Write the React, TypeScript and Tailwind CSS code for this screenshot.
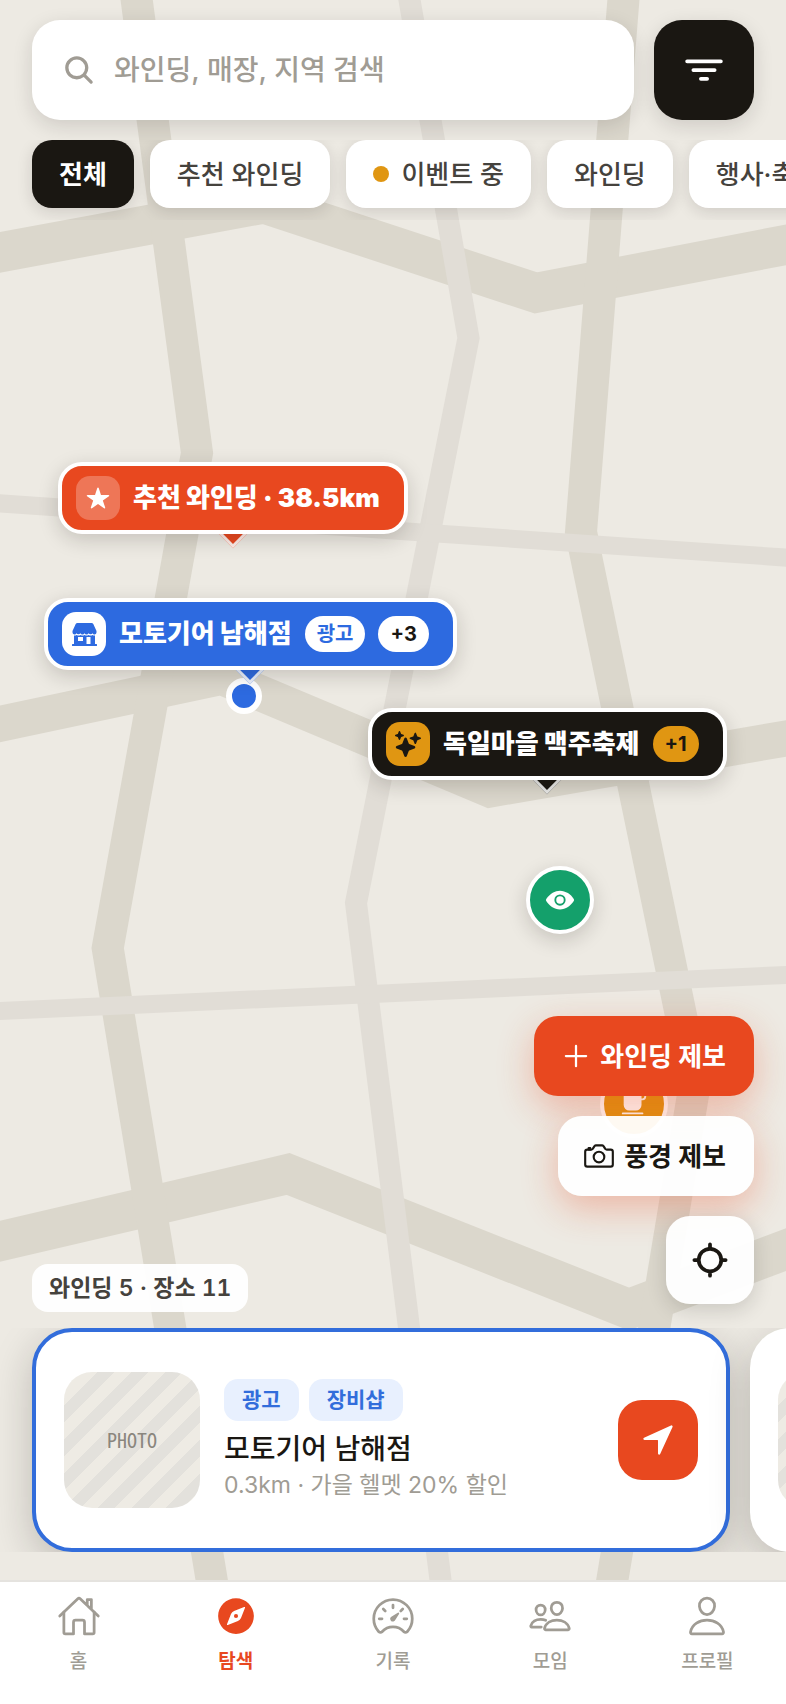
import type { ReactNode } from 'react'
import {
  IoAdd,
  IoCafe,
  IoCameraOutline,
  IoCompass,
  IoEye,
  IoFilter,
  IoHomeOutline,
  IoLocate,
  IoNavigate,
  IoPeopleOutline,
  IoPersonOutline,
  IoSearch,
  IoSparkles,
  IoSpeedometerOutline,
  IoStar,
} from 'react-icons/io5'

const chips = [
  { label: '전체', active: true },
  { label: '추천 와인딩' },
  { label: '이벤트 중', dot: true },
  { label: '와인딩' },
  { label: '행사·축제' },
]

const tabs = [
  { label: '홈', icon: IoHomeOutline },
  { label: '탐색', icon: IoCompass, active: true },
  { label: '기록', icon: IoSpeedometerOutline },
  { label: '모임', icon: IoPeopleOutline },
  { label: '프로필', icon: IoPersonOutline },
]

function MapBackground() {
  return (
    <svg
      className="absolute inset-0 h-full w-full"
      viewBox="0 0 786 1580"
      preserveAspectRatio="none"
      fill="none"
      aria-hidden="true"
    >
      <g stroke="#dbd7cc">
        <path d="M-20 256 L264 203.500 L536 293 L806 241" strokeWidth="40" />
        <path d="M-20 728 L221.600 677 L490 789.500 L806 735" strokeWidth="36" />
        <path d="M-20 1246 L288 1174 L629 1309 L806 1242" strokeWidth="40" />
        <path d="M134 -20 L197 453 L107.700 948 L215 1600" strokeWidth="32" />
        <path d="M625 -20 L581 532 L695 1083 L609 1600" strokeWidth="32" />
      </g>
      <g stroke="#e1ddd6">
        <path d="M406 -20 L468.500 338 L356 903 L443 1600" strokeWidth="22" />
        <path d="M-20 502 L806 559" strokeWidth="18" />
        <path d="M-20 1012 L806 974" strokeWidth="18" />
      </g>
    </svg>
  )
}

function StoreIcon() {
  return (
    <svg className="w-[25px]" viewBox="0 0 25 23" fill="currentColor" aria-hidden="true">
      <path d="M5.500 0h14a2 2 0 0 1 1.800 1.100L24.500 8v1.600a2 2 0 0 1-3.900.6 2.300 2.300 0 0 1-4 0 2.300 2.300 0 0 1-4.100 0 2.300 2.300 0 0 1-4.100 0 2.300 2.300 0 0 1-4 0A2 2 0 0 1 .5 9.600V8l3.200-6.900A2 2 0 0 1 5.500 0Z" />
      <path
        fillRule="evenodd"
        d="M2 12.500c1 .2 1.900 0 2.600-.6a4 4 0 0 0 4 0 4 4 0 0 0 4 0 4 4 0 0 0 4 0 4 4 0 0 0 4 0c.7.6 1.500.8 2.400.6V21h1.200a.8.8 0 0 1 0 2H.8a.8.8 0 0 1 0-2H2ZM6 14v4h5v-4Zm8.500 0v7h4v-7Z"
      />
    </svg>
  )
}

type PinProps = {
  className: string
  color: string
  iconBox: string
  icon: ReactNode
  label: string
  children?: ReactNode
}

function LabelPin({ className, color, iconBox, icon, label, children }: PinProps) {
  return (
    <div className={`absolute isolate ${className}`}>
      <span
        className={`absolute -bottom-[10px] left-1/2 -z-10 size-5 -translate-x-1/2 rotate-45 border-[3px] border-white/90 ${color}`}
      />
      <button
        type="button"
        className={`flex h-[72px] items-center gap-[13px] rounded-3xl border-4 border-white pl-[14px] pr-6 whitespace-nowrap text-white shadow-[0_6px_20px_rgba(26,23,18,0.18)] ${color}`}
      >
        <span className={`flex size-11 items-center justify-center rounded-[14px] ${iconBox}`}>{icon}</span>
        <span className="text-[26px] leading-9 font-black">{label}</span>
        {children}
      </button>
    </div>
  )
}

function Photo() {
  return (
    <div className="flex size-[136px] shrink-0 items-center justify-center rounded-[28px] bg-[repeating-linear-gradient(135deg,#e3e1dc_0px,#e3e1dc_12px,#eeebe4_12px,#eeebe4_24px)]">
      <span className="font-['Noto_Sans_Mono_CJK_KR','Noto_Sans_CJK_KR',monospace] text-[20px] font-thin text-[#8a867e]">
        PHOTO
      </span>
    </div>
  )
}

export default function App() {
  return (
    <div className="flex min-h-screen flex-col bg-white font-[Inter,'Noto_Sans_CJK_KR',sans-serif] text-[#1a1712]">
      <main className="relative isolate flex flex-1 flex-col overflow-hidden bg-[#edeae3] pt-5 pb-7">
        <MapBackground />

        <LabelPin
          className="top-[462px] left-[58px]"
          color="bg-[#e8481f]"
          iconBox="bg-white/25"
          icon={<IoStar className="size-6" />}
          label="추천 와인딩 · 38.5km"
        />
        <span className="absolute top-[678px] left-[226px] size-9 rounded-full border-[6px] border-white bg-[#2d6ae0]" />
        <LabelPin
          className="top-[598px] left-[44px]"
          color="bg-[#2d6ae0]"
          iconBox="bg-white text-[#2d6ae0]"
          icon={<StoreIcon />}
          label="모토기어 남해점"
        >
          <span className="rounded-full bg-white px-3 text-[20px] leading-9 font-bold text-[#2d6ae0]">광고</span>
          <span className="rounded-full bg-white px-3 text-[20px] leading-9 font-bold text-[#1a1712]">+3</span>
        </LabelPin>
        <LabelPin
          className="top-[708px] left-[368px]"
          color="bg-[#1a1712]"
          iconBox="bg-[#e09612] text-[#1a1712]"
          icon={<IoSparkles className="size-[26px]" />}
          label="독일마을 맥주축제"
        >
          <span className="rounded-full bg-[#e09612] px-3 text-[20px] leading-9 font-bold text-[#1a1712]">+1</span>
        </LabelPin>
        <button
          type="button"
          aria-label="풍경"
          className="absolute top-[866px] left-[526px] flex size-[68px] items-center justify-center rounded-full border-4 border-white bg-[#14a06b] text-white shadow-[0_6px_20px_rgba(26,23,18,0.18)]"
        >
          <IoEye className="size-[30px]" />
        </button>
        <button
          type="button"
          aria-label="카페"
          className="absolute top-[1070px] left-[600px] flex size-[68px] items-center justify-center rounded-full border-4 border-white bg-[#e09612] text-white"
        >
          <IoCafe className="size-[30px]" />
        </button>

        <div className="relative flex gap-5 px-8">
          <label className="flex h-[100px] min-w-0 flex-1 items-center gap-[18px] rounded-[28px] bg-white px-[30px] shadow-[0_6px_20px_rgba(26,23,18,0.14)]">
            <IoSearch className="size-[34px] shrink-0 text-[#a09c94]" />
            <input
              type="search"
              aria-label="검색"
              placeholder="와인딩, 매장, 지역 검색"
              className="w-full min-w-0 text-[28px] font-medium outline-none placeholder:text-[#a09c94]"
            />
          </label>
          <button
            type="button"
            aria-label="필터"
            className="flex size-[100px] shrink-0 items-center justify-center rounded-[28px] bg-[#1a1712] text-white shadow-[0_6px_20px_rgba(26,23,18,0.14)]"
          >
            <IoFilter className="size-10" />
          </button>
        </div>

        <div className="relative mt-5 flex gap-4 overflow-hidden px-8 pb-3">
          {chips.map((chip) => (
            <button
              key={chip.label}
              type="button"
              className={`flex h-[68px] shrink-0 items-center gap-3 rounded-[20px] px-[27px] text-[26px] whitespace-nowrap shadow-[0_4px_16px_rgba(26,23,18,0.14)] ${
                chip.active ? 'bg-[#1a1712] font-bold text-white' : 'bg-white font-medium text-[#45423d]'
              }`}
            >
              {chip.dot && <span className="size-4 rounded-full bg-[#e09612]" />}
              {chip.label}
            </button>
          ))}
        </div>

        <div className="relative mt-auto flex items-end justify-between px-8">
          <p className="rounded-2xl bg-white/95 px-[17px] text-[23px] leading-[48px] font-semibold text-[#45423d] tabular-nums">
            와인딩 5 · 장소 11
          </p>
          <div className="mb-2 flex flex-col items-end gap-5">
            <button
              type="button"
              className="flex h-20 items-center gap-[6px] rounded-3xl bg-[#e8481f] pr-7 pl-6 text-[26px] font-bold text-white shadow-[0_12px_36px_rgba(232,72,31,0.32)]"
            >
              <IoAdd className="size-9" />
              와인딩 제보
            </button>
            <button
              type="button"
              className="flex h-20 items-center gap-2 rounded-3xl bg-white/95 pr-7 pl-6 text-[26px] font-bold shadow-[0_12px_36px_rgba(232,72,31,0.32)]"
            >
              <IoCameraOutline className="size-[34px]" />
              풍경 제보
            </button>
            <button
              type="button"
              aria-label="현재 위치"
              className="flex size-[88px] items-center justify-center rounded-3xl bg-white/95 shadow-[0_6px_20px_rgba(26,23,18,0.16)]"
            >
              <IoLocate className="size-10" />
            </button>
          </div>
        </div>

        <div className="relative mt-4 flex gap-5 overflow-hidden px-8">
          <article className="flex h-56 w-[calc(100%-24px)] shrink-0 items-center gap-6 rounded-[40px] border-4 border-[#326ddb] bg-white px-7 shadow-[0_12px_40px_rgba(26,23,18,0.22)]">
            <Photo />
            <div className="min-w-0 flex-1">
              <div className="flex gap-[10px] text-[21px] leading-[42px] font-bold text-[#326ddb]">
                <span className="rounded-[14px] bg-[#e8f0fe] px-[18px]">광고</span>
                <span className="rounded-[14px] bg-[#e8f0fe] px-[18px]">장비샵</span>
              </div>
              <h2 className="mt-[10px] text-[28px] leading-9 font-medium">모토기어 남해점</h2>
              <p className="mt-[2px] text-[23px] leading-8 text-[#a09c94]">0.3km · 가을 헬멧 20% 할인</p>
            </div>
            <button
              type="button"
              aria-label="길찾기"
              className="flex size-20 shrink-0 items-center justify-center rounded-3xl bg-[#e8481f] text-white"
            >
              <IoNavigate className="size-9" />
            </button>
          </article>
          <article className="flex h-56 w-[calc(100%-24px)] shrink-0 items-center rounded-[40px] bg-white px-7 shadow-[0_12px_40px_rgba(26,23,18,0.22)]">
            <Photo />
          </article>
        </div>
      </main>

      <nav className="grid h-[124px] grid-cols-5 border-t-2 border-[#e5e3df] pt-3">
        {tabs.map(({ label, icon: Icon, active }) => (
          <a
            key={label}
            href="#"
            className={`flex flex-col items-center gap-3 text-[19px] leading-6 ${
              active ? 'font-bold text-[#e8481f]' : 'font-medium text-[#a09c94]'
            }`}
          >
            <Icon className="size-11" />
            {label}
          </a>
        ))}
      </nav>
    </div>
  )
}
